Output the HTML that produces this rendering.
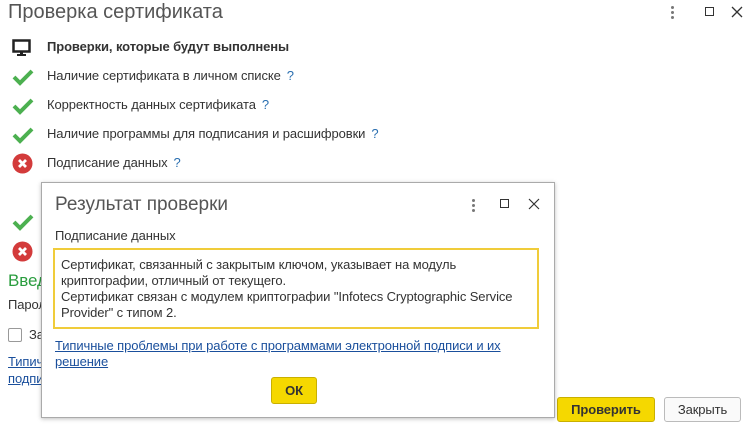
<!DOCTYPE html>
<html><head><meta charset="utf-8"><style>
*{margin:0;padding:0;box-sizing:border-box}
body{width:756px;height:428px;background:#fff;font-family:"Liberation Sans",Arial,sans-serif;font-size:13px;letter-spacing:-0.1px;color:#333;position:relative;overflow:hidden}
.a{position:absolute;white-space:nowrap}
.q{color:#2a6fb0;margin-left:6px}
.link{color:#1a4f9c;text-decoration:underline}
.btn{position:absolute;border-radius:3px;text-align:center;font-size:13px}
</style></head><body>
<div class="a" style="left:8px;top:1px;font-size:20px;color:#555;letter-spacing:0">Проверка сертификата</div>
<div class="a" style="left:671px;top:6px;width:3px">
<div style="width:3px;height:3px;background:#777;border-radius:50%;margin-bottom:2px"></div><div style="width:3px;height:3px;background:#777;border-radius:50%;margin-bottom:2px"></div><div style="width:3px;height:3px;background:#777;border-radius:50%"></div></div>
<div class="a" style="left:705px;top:7px;width:9px;height:9px;border:1.5px solid #333"></div>
<svg class="a" style="left:731px;top:6px" width="12" height="12"><path d="M1 1L11 11M11 1L1 11" stroke="#333" stroke-width="1.3"/></svg>

<svg class="a" style="left:12px;top:39px" width="20" height="18"><rect x="1.5" y="1.5" width="16" height="11" fill="none" stroke="#222" stroke-width="2.5"/><rect x="8" y="13" width="3" height="3" fill="#222"/><rect x="5" y="15" width="9" height="2" fill="#222"/></svg>
<div class="a" style="left:47px;top:39px;font-weight:bold;color:#333">Проверки, которые будут выполнены</div>

<svg class="a" style="left:12px;top:68px" width="22" height="18"><path d="M2 9L8 15L20 3" fill="none" stroke="#4cb050" stroke-width="4"/></svg>
<div class="a" style="left:47px;top:68px">Наличие сертификата в личном списке<span class="q">?</span></div>
<svg class="a" style="left:12px;top:97px" width="22" height="18"><path d="M2 9L8 15L20 3" fill="none" stroke="#4cb050" stroke-width="4"/></svg>
<div class="a" style="left:47px;top:97px">Корректность данных сертификата<span class="q">?</span></div>
<svg class="a" style="left:12px;top:126px" width="22" height="18"><path d="M2 9L8 15L20 3" fill="none" stroke="#4cb050" stroke-width="4"/></svg>
<div class="a" style="left:47px;top:126px">Наличие программы для подписания и расшифровки<span class="q">?</span></div>
<svg class="a" style="left:12px;top:153px" width="21" height="21"><circle cx="10.5" cy="10.5" r="10" fill="#d33b3b"/><path d="M7 7L14 14M14 7L7 14" stroke="#fff" stroke-width="2.8"/></svg>
<div class="a" style="left:47px;top:155px">Подписание данных<span class="q">?</span></div>

<svg class="a" style="left:12px;top:213px" width="22" height="18"><path d="M2 9L8 15L20 3" fill="none" stroke="#4cb050" stroke-width="4"/></svg>
<svg class="a" style="left:12px;top:241px" width="21" height="21"><circle cx="10.5" cy="10.5" r="10" fill="#d33b3b"/><path d="M7 7L14 14M14 7L7 14" stroke="#fff" stroke-width="2.8"/></svg>
<div class="a" style="left:8px;top:271px;font-size:17px;color:#2a9d3f">Введ</div>
<div class="a" style="left:8px;top:297px">Парол</div>
<div class="a" style="left:8px;top:328px;width:14px;height:14px;border:1px solid #999;border-radius:2px"></div>
<div class="a" style="left:29px;top:327px">За</div>
<div class="a link" style="left:8px;top:354px">Типич</div>
<div class="a link" style="left:8px;top:371px">подпи</div>

<div class="btn" style="left:557px;top:397px;width:98px;height:25px;background:#f5d800;border:1px solid #c9b000;font-weight:bold;line-height:23px;color:#333">Проверить</div>
<div class="btn" style="left:664px;top:397px;width:77px;height:25px;background:#fafafa;border:1px solid #bbb;line-height:23px">Закрыть</div>

<div class="a" style="left:41px;top:182px;width:514px;height:236px;background:#fff;border:1px solid #aaa;box-shadow:0 1px 4px rgba(0,0,0,.25)">
<div class="a" style="left:13px;top:11px;font-size:19px;color:#555;letter-spacing:0">Результат проверки</div>
<div class="a" style="left:430px;top:16px;width:3px"><div style="width:3px;height:3px;background:#777;border-radius:50%;margin-bottom:2px"></div><div style="width:3px;height:3px;background:#777;border-radius:50%;margin-bottom:2px"></div><div style="width:3px;height:3px;background:#777;border-radius:50%"></div></div>
<div class="a" style="left:458px;top:16px;width:9px;height:9px;border:1.5px solid #333"></div>
<svg class="a" style="left:486px;top:15px" width="12" height="12"><path d="M1 1L11 11M11 1L1 11" stroke="#333" stroke-width="1.2"/></svg>
<div class="a" style="left:13px;top:45px">Подписание данных</div>
<div class="a" style="left:11px;top:65px;width:486px;height:81px;border:2px solid #f0cc3a;padding:7px 0 0 6px;line-height:16px;white-space:normal">Сертификат, связанный с закрытым ключом, указывает на модуль<br>криптографии, отличный от текущего.<br>Сертификат связан с модулем криптографии "Infotecs Cryptographic Service<br>Provider" с типом 2.</div>
<div class="a link" style="left:13px;top:155px;line-height:16px">Типичные проблемы при работе с программами электронной подписи и их<br>решение</div>
<div class="btn" style="left:229px;top:194px;width:46px;height:27px;background:#f5d800;border:1px solid #c9b000;font-weight:bold;line-height:25px;color:#333">ОК</div>
</div>
</body></html>
